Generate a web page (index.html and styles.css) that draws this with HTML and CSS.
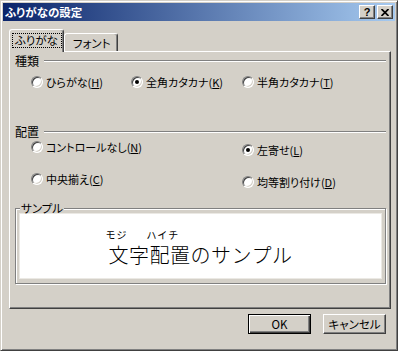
FILE: index.html
```html
<!DOCTYPE html>
<html lang="ja">
<head>
    <meta charset="utf-8">
    <title>ふりがなの設定</title>
    <link rel="stylesheet" href="styles.css">
</head>
<body>
    <div class="dialog">
        <div class="titlebar">
            <span class="title">ふりがなの設定</span>
            <div class="caption-btns">
                <button class="cap-btn">?</button>
                <button class="cap-btn">
                    <svg width="8" height="7" viewBox="0 0 8 7"><path d="M0.5 0L7.5 7M7.5 0L0.5 7" stroke="#000" stroke-width="1.7"/></svg>
                </button>
            </div>
        </div>

        <div class="tabs">
            <div class="tab active"><span class="focus">ふりがな</span></div>
            <div class="tab">フォント</div>
        </div>

        <div class="panel">
            <div class="group-head"><span>種類</span><span class="rule"></span></div>
            <div class="type-opts">
                <label class="radio"><span class="dot"></span><span>ひらがな(<u>H</u>)</span></label>
                <label class="radio checked"><span class="dot"></span><span>全角カタカナ(<u>K</u>)</span></label>
                <label class="radio"><span class="dot"></span><span>半角カタカナ(<u>T</u>)</span></label>
            </div>

            <div class="group-head second"><span>配置</span><span class="rule"></span></div>
            <div class="align-opts">
                <label class="radio"><span class="dot"></span><span>コントロールなし(<u>N</u>)</span></label>
                <label class="radio checked right"><span class="dot"></span><span>左寄せ(<u>L</u>)</span></label>
                <label class="radio"><span class="dot"></span><span>中央揃え(<u>C</u>)</span></label>
                <label class="radio right"><span class="dot"></span><span>均等割り付け(<u>D</u>)</span></label>
            </div>

            <fieldset class="sample">
                <legend>サンプル</legend>
                <div class="sample-box">
                    <span class="word"><span class="kana">モジ</span>文字</span><span class="word"><span class="kana">ハイチ</span>配置</span>のサンプル
                </div>
            </fieldset>
        </div>

        <div class="actions">
            <button class="btn default">OK</button>
            <button class="btn">キャンセル</button>
        </div>
    </div>
</body>
</html>
```

FILE: styles.css
```css
body {
    margin: 0;
    font-family: "Noto Sans CJK JP", sans-serif;
    font-size: 12px;
    color: #000;
    background: #d4d0c8;
}

.dialog {
    width: 398px;
    height: 351px;
    box-sizing: border-box;
    padding: 2px;
    background: #d4d0c8;
    border: 1px solid;
    border-color: #d4d0c8 #404040 #404040 #d4d0c8;
    box-shadow: inset 1px 1px #fff, inset -1px -1px #808080;
}

/* title bar */
.titlebar {
    height: 18px;
    display: flex;
    align-items: center;
    justify-content: space-between;
    padding: 0 2px;
    background: linear-gradient(to right, #0a246a, #a6caf0);
}

.title {
    color: #fff;
    font-weight: bold;
    font-size: 11.5px;
    line-height: 18px;
    font-feature-settings: "palt";
}

.caption-btns {
    display: flex;
    gap: 2px;
}

.cap-btn {
    width: 16px;
    height: 14px;
    box-sizing: border-box;
    padding: 0;
    display: flex;
    align-items: center;
    justify-content: center;
    background: #d4d0c8;
    border: 1px solid;
    border-color: #fff #404040 #404040 #fff;
    box-shadow: inset -1px -1px #808080;
    font-family: "Liberation Sans", sans-serif;
    font-weight: bold;
    font-size: 11px;
    line-height: 11px;
}

/* tabs */
.tabs {
    display: flex;
    align-items: flex-end;
    margin: 8px 0 0 6px;
    height: 22px;
}

.tab {
    box-sizing: border-box;
    height: 18px;
    padding: 2px 7px 0 8px;
    line-height: 14px;
    font-size: 11.5px;
    white-space: nowrap;
    background: #d4d0c8;
    border: 1px solid;
    border-bottom: none;
    border-color: #fff #404040 #fff #fff;
    border-radius: 3px 3px 0 0;
    box-shadow: inset -1px 0 #808080;
    font-feature-settings: "palt";
}

.tab.active {
    position: relative;
    z-index: 1;
    height: 23px;
    margin-bottom: -1px;
    padding: 3px 2px 0 3px;
}

.focus {
    display: inline-block;
    padding: 0 3px 0 2px;
    line-height: 13px;
    outline: 1px dotted #000;
}

/* tab page */
.panel {
    box-sizing: border-box;
    width: 382px;
    height: 258px;
    margin-left: 6px;
    padding: 0 4px 0 5px;
    border: 1px solid;
    border-color: #fff #404040 #404040 #fff;
    box-shadow: inset -1px -1px #808080;
    font-size: 11px;
}

.group-head {
    display: flex;
    align-items: center;
    gap: 5px;
    height: 15px;
    margin-top: 1px;
    line-height: 15px;
    font-size: 12px;
}

.group-head.second {
    margin-top: 35px;
}

.rule {
    flex: 1;
    border-top: 1px solid #808080;
    border-bottom: 1px solid #fff;
}

.type-opts {
    display: grid;
    grid-template-columns: 100px 111px auto;
    margin-top: 7px;
    padding-left: 16px;
}

.align-opts {
    display: grid;
    grid-template-columns: 211px auto;
    align-items: start;
    row-gap: 15px;
    margin-top: 1px;
    padding-left: 16px;
}

.radio {
    display: flex;
    align-items: center;
    gap: 3px;
    height: 14px;
    line-height: 14px;
    white-space: nowrap;
    font-feature-settings: "palt";
}

.radio.right {
    margin-top: 3px;
}

.dot {
    flex: none;
    width: 12px;
    height: 12px;
    box-sizing: border-box;
    display: flex;
    align-items: center;
    justify-content: center;
    border-radius: 50%;
    background: #fff;
    border: 1px solid;
    border-color: #808080 #fff #fff #808080;
    box-shadow: inset 1px 1px #404040, inset -1px -1px #d4d0c8;
}

.radio.checked .dot::after {
    content: "";
    width: 4px;
    height: 4px;
    border-radius: 50%;
    background: #000;
}

u {
    text-decoration-thickness: 1px;
    text-underline-offset: 1px;
}

/* sample group */
.sample {
    margin: 13px 0 0;
    padding: 0 3px 4px;
    border: 1px solid #808080;
    box-shadow: inset 1px 1px #fff, 1px 1px #fff;
}

.sample legend {
    margin-left: 1px;
    padding: 0 1px;
    line-height: 12px;
    font-size: 11.5px;
    background: #d4d0c8;
    font-feature-settings: "palt";
}

.sample-box {
    box-sizing: border-box;
    height: 66px;
    margin-top: -1px;
    padding-top: 15px;
    text-align: center;
    background: #fff;
    border: 1px solid #ebe9e4;
    font-size: 20px;
    font-weight: 300;
    line-height: 22px;
    letter-spacing: 0.5px;
}

.word {
    display: inline-flex;
    flex-direction: column;
    align-items: flex-start;
    vertical-align: bottom;
}

.kana {
    font-size: 10px;
    font-weight: 400;
    line-height: 12px;
    letter-spacing: 1px;
    margin: 0 0 3px -3px;
}

/* buttons */
.actions {
    display: flex;
    justify-content: flex-end;
    gap: 12px;
    margin-top: 5px;
    padding-right: 9px;
}

.btn {
    width: 63px;
    height: 20px;
    box-sizing: border-box;
    padding: 0;
    font-family: inherit;
    font-size: 11.5px;
    line-height: 16px;
    color: #000;
    background: #d4d0c8;
    border: 1px solid;
    border-color: #fff #404040 #404040 #fff;
    box-shadow: inset -1px -1px #808080;
    font-feature-settings: "palt";
}

.btn.default {
    border-color: #000;
    box-shadow: inset 1px 1px #fff, inset -1px -1px #404040, inset -2px -2px #808080;
}
```
